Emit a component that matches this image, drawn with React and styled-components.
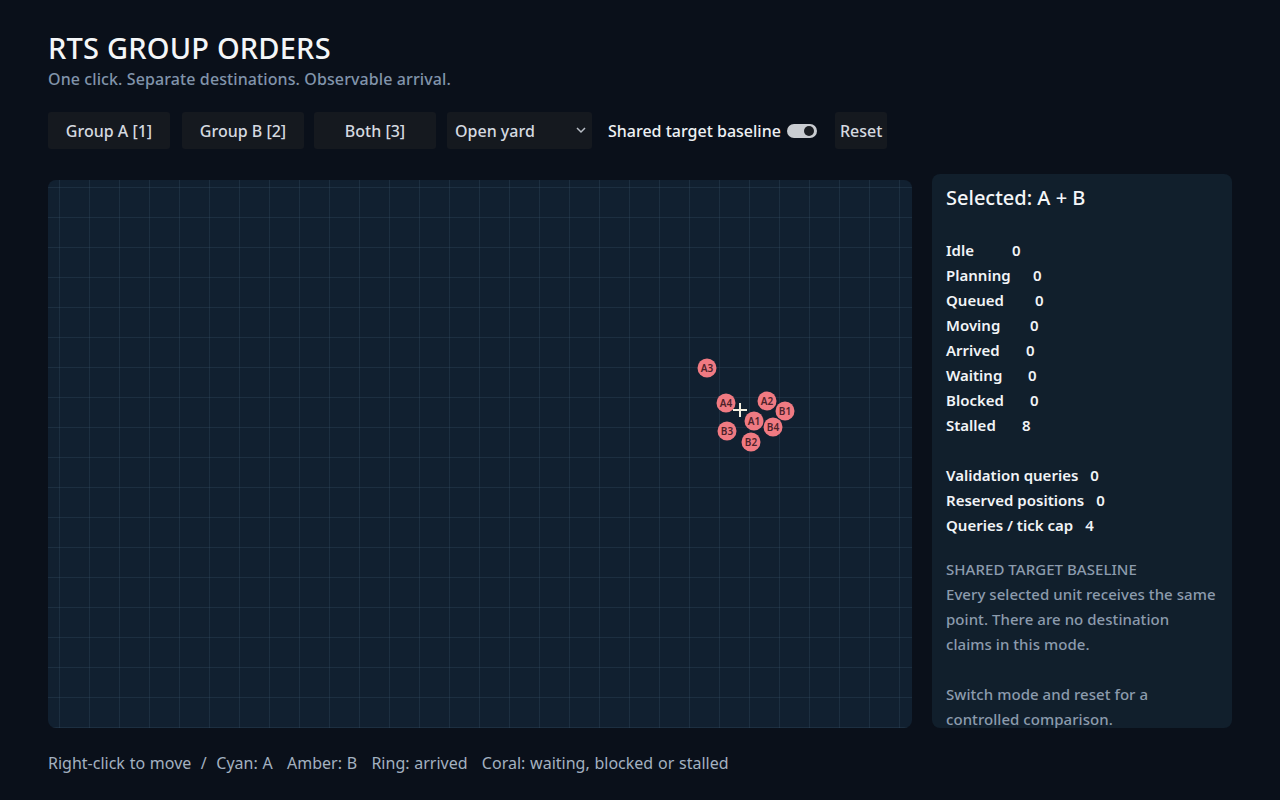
import styled, { createGlobalStyle } from "styled-components";

const GlobalStyle = createGlobalStyle`
  html, body {
    margin: 0;
    padding: 0;
    background: #0a101a;
  }
  body {
    font-family: "Noto Sans", "Open Sans", sans-serif;
    color: #e8edf2;
  }
  * { box-sizing: border-box; }
`;

const Page = styled.div`
  width: 1280px;
  height: 800px;
  padding: 30px 48px 0 48px;
  overflow: hidden;
`;

const Title = styled.h1`
  margin: 0;
  font-size: 29px;
  font-weight: 500;
  line-height: 36px;
  color: #f4f6f8;
  letter-spacing: 0.2px;
`;

const Subtitle = styled.p`
  margin: 0;
  font-size: 16px;
  font-weight: 500;
  line-height: 26px;
  letter-spacing: 0.1px;
  color: #8194ab;
`;

const Toolbar = styled.div`
  display: flex;
  align-items: center;
  gap: 12px;
  margin-top: 20px;
  height: 37px;
`;

const Button = styled.button`
  height: 37px;
  width: ${(p) => (p.$compact ? "auto" : "122px")};
  padding: ${(p) => (p.$compact ? "0 5px" : "0")};
  margin-left: ${(p) => p.$shift || 0}px;
  border: none;
  border-radius: 3px;
  background: #15191f;
  color: #d5dae0;
  font-family: inherit;
  font-size: 16px;
  font-weight: 500;
`;

const SelectBox = styled.div`
  position: relative;
  width: 145px;
  height: 37px;
  margin-left: -1px;
  border-radius: 3px;
  background: #15191f;
  color: #d5dae0;
  font-size: 16px;
  font-weight: 500;
  display: flex;
  align-items: center;
  padding-left: 8px;
`;

const Chevron = styled.svg`
  position: absolute;
  right: 6px;
  top: 14px;
`;

const ToggleLabel = styled.label`
  display: flex;
  align-items: center;
  gap: 6px;
  margin-left: 4px;
  font-size: 16px;
  font-weight: 500;
  color: #eef1f4;
`;

const Track = styled.span`
  position: relative;
  display: inline-block;
  width: 30px;
  height: 14px;
  border-radius: 7px;
  background: #c9ccd1;
`;

const Knob = styled.span`
  position: absolute;
  right: 3px;
  top: 2px;
  width: 10px;
  height: 10px;
  border-radius: 50%;
  background: #1b1e23;
`;

const Main = styled.div`
  display: flex;
  align-items: flex-start;
  gap: 20px;
  margin-top: 25px;
`;

const Field = styled.div`
  position: relative;
  width: 864px;
  height: 548px;
  margin-top: 6px;
  border-radius: 8px;
  background-color: #112030;
  background-image:
    linear-gradient(to right, rgba(70, 100, 125, 0.22) 1px, transparent 1px),
    linear-gradient(to bottom, rgba(70, 100, 125, 0.22) 1px, transparent 1px);
  background-size: 30px 30px;
  background-position: 11px 7px;
  overflow: hidden;
`;

const Overlay = styled.svg`
  position: absolute;
  inset: 0;
`;

const Panel = styled.aside`
  width: 300px;
  height: 554px;
  border-radius: 8px;
  background: #111f2c;
  padding: 10px 16px 0 14px;
  overflow: hidden;
`;

const PanelTitle = styled.h2`
  margin: 0 0 26px 0;
  font-size: 20px;
  font-weight: 500;
  line-height: 28px;
  color: #f4f6f8;
`;

const StatList = styled.div`
  margin-bottom: ${(p) => p.$after}px;
`;

const StatRow = styled.div`
  display: flex;
  font-size: 15px;
  font-weight: 600;
  line-height: 25px;
  color: #f1f4f7;
`;

const StatLabel = styled.span`
  width: ${(p) => p.$w}px;
  flex: none;
  ${(p) => (p.$w ? "" : "margin-right: 12px;")}
`;

const Note = styled.div`
  font-size: 15px;
  font-weight: 500;
  line-height: 25px;
  letter-spacing: 0.05px;
  color: #8c9bad;
`;

const NoteHead = styled.div`
  text-transform: uppercase;
`;

const NotePara = styled.p`
  margin: 0 0 25px 0;
`;

const Footer = styled.div`
  margin-top: 22px;
  font-size: 16px;
  line-height: 26px;
  color: #a3b1c0;
  font-stretch: condensed;
  word-spacing: 0.6px;
  white-space: pre;
`;

const states = [
  ["Idle", 0, 66],
  ["Planning", 0, 87],
  ["Queued", 0, 89],
  ["Moving", 0, 84],
  ["Arrived", 0, 80],
  ["Waiting", 0, 82],
  ["Blocked", 0, 84],
  ["Stalled", 8, 76],
];

const counters = [
  ["Validation queries", 0],
  ["Reserved positions", 0],
  ["Queries / tick cap", 4],
];

// unit centres in field coordinates (field origin at 48,180)
const units = [
  ["A3", 659, 188],
  ["A4", 678, 223],
  ["A2", 719, 221],
  ["B1", 737, 231],
  ["A1", 706, 241],
  ["B4", 725, 247],
  ["B3", 679, 251],
  ["B2", 703, 262],
];

const App = () => {
  return (
    <Page>
      <GlobalStyle />
      <Title>RTS GROUP ORDERS</Title>
      <Subtitle>One click. Separate destinations. Observable arrival.</Subtitle>

      <Toolbar>
        <Button>Group A [1]</Button>
        <Button>Group B [2]</Button>
        <Button $shift={-2}>Both [3]</Button>
        <SelectBox>
          Open yard
          <Chevron width="10" height="8" viewBox="0 0 10 8">
            <path d="M1 2 L5 6 L9 2" fill="none" stroke="#b8bec6" strokeWidth="1.5" />
          </Chevron>
        </SelectBox>
        <ToggleLabel>
          Shared target baseline
          <Track>
            <Knob />
          </Track>
        </ToggleLabel>
        <Button $compact $shift={6}>Reset</Button>
      </Toolbar>

      <Main>
        <Field>
          <Overlay width="864" height="548">
            {units.map(([id, x, y]) => (
              <g key={id}>
                <circle cx={x} cy={y} r="9.5" fill="#f07a82" />
                <text
                  x={x}
                  y={y + 3.5}
                  textAnchor="middle"
                  fontSize="10"
                  fontWeight="600"
                  fontFamily="Noto Sans, sans-serif"
                  fill="#4e2229"
                >
                  {id}
                </text>
              </g>
            ))}
            <path d="M692 223 V237 M685 230 H699" stroke="#f3efe0" strokeWidth="2" />
          </Overlay>
        </Field>

        <Panel>
          <PanelTitle>Selected: A + B</PanelTitle>
          <StatList $after={25}>
            {states.map(([label, value, w]) => (
              <StatRow key={label}>
                <StatLabel $w={w}>{label}</StatLabel>
                <span>{value}</span>
              </StatRow>
            ))}
          </StatList>
          <StatList $after={19}>
            {counters.map(([label, value]) => (
              <StatRow key={label}>
                <StatLabel>{label}</StatLabel>
                <span>{value}</span>
              </StatRow>
            ))}
          </StatList>
          <Note>
            <NoteHead>Shared target baseline</NoteHead>
            <NotePara>
              Every selected unit receives the same point. There are no destination claims in this mode.
            </NotePara>
            <NotePara>Switch mode and reset for a controlled comparison.</NotePara>
          </Note>
        </Panel>
      </Main>

      <Footer>Right-click to move  /  Cyan: A   Amber: B   Ring: arrived   Coral: waiting, blocked or stalled</Footer>
    </Page>
  );
};

export default App;
